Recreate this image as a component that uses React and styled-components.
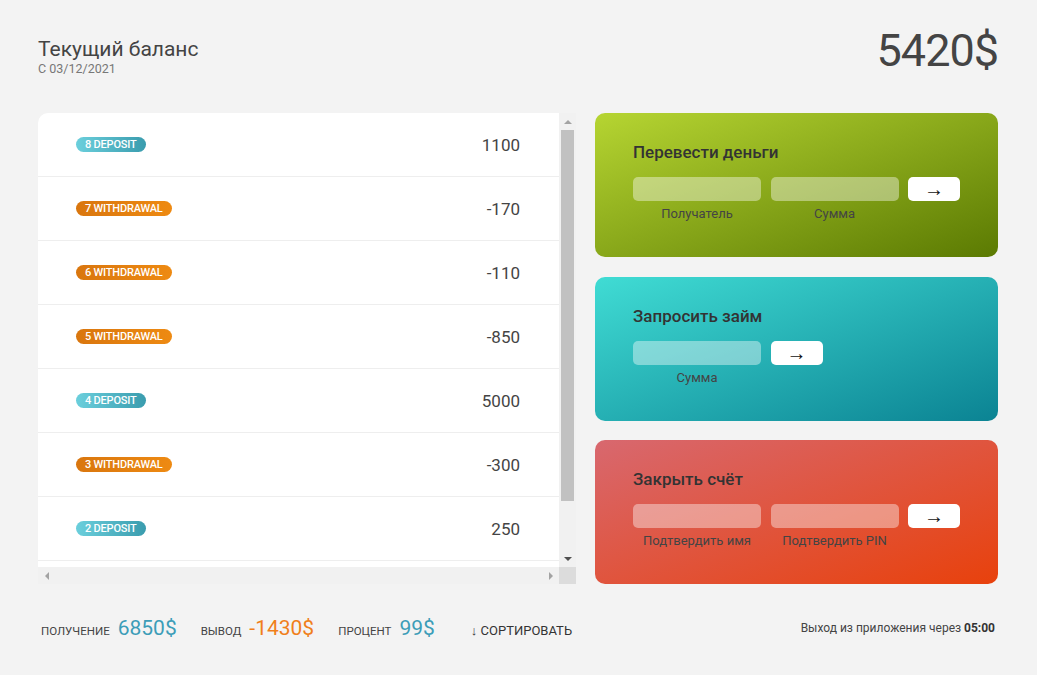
import styled, { createGlobalStyle } from "styled-components";

const movements = [
  { n: 8, type: "deposit", value: 1100 },
  { n: 7, type: "withdrawal", value: -170 },
  { n: 6, type: "withdrawal", value: -110 },
  { n: 5, type: "withdrawal", value: -850 },
  { n: 4, type: "deposit", value: 5000 },
  { n: 3, type: "withdrawal", value: -300 },
  { n: 2, type: "deposit", value: 250 },
  { n: 1, type: "deposit", value: 1000 },
];

const operations = [
  {
    kind: "transfer",
    title: "Перевести деньги",
    fields: ["Получатель", "Сумма"],
  },
  { kind: "loan", title: "Запросить займ", fields: ["Сумма"] },
  {
    kind: "close",
    title: "Закрыть счёт",
    fields: ["Подтвердить имя", "Подтвердить PIN"],
  },
];

const App = () => (
  <>
    <GlobalStyle />
    <Page>
      <Header>
        <div>
          <BalanceLabel>Текущий баланс</BalanceLabel>
          <BalanceDate>С 03/12/2021</BalanceDate>
        </div>
        <BalanceValue>5420$</BalanceValue>
      </Header>

      <Main>
        <Movements>
          <MovementList>
            {movements.map((m) => (
              <MovementRow key={m.n}>
                <TypeBadge type={m.type}>
                  {m.n} {m.type}
                </TypeBadge>
                <MovementValue>{m.value}</MovementValue>
              </MovementRow>
            ))}
          </MovementList>
          <VScroll>
            <ScrollButton>
              <Arrow dir="up" />
            </ScrollButton>
            <Thumb />
            <ScrollButton>
              <Arrow dir="down" dark />
            </ScrollButton>
          </VScroll>
          <HScroll>
            <ScrollButton>
              <Arrow dir="left" />
            </ScrollButton>
            <ScrollButton>
              <Arrow dir="right" />
            </ScrollButton>
          </HScroll>
          <ScrollCorner />
        </Movements>

        <Operations>
          {operations.map((op) => (
            <Operation key={op.kind} kind={op.kind}>
              <OpTitle>{op.title}</OpTitle>
              <Form count={op.fields.length}>
                {op.fields.map((f) => (
                  <Input key={f} />
                ))}
                <FormButton type="button">→</FormButton>
                {op.fields.map((f) => (
                  <FieldLabel key={f}>{f}</FieldLabel>
                ))}
              </Form>
            </Operation>
          ))}
        </Operations>
      </Main>

      <Footer>
        <Summary>
          <SummaryLabel>получение</SummaryLabel>
          <SummaryValue color="#3c9db8">6850$</SummaryValue>
          <SummaryLabel>вывод</SummaryLabel>
          <SummaryValue color="#f07f1a">-1430$</SummaryValue>
          <SummaryLabel>процент</SummaryLabel>
          <SummaryValue color="#3c9db8">99$</SummaryValue>
          <SortButton>↓ сортировать</SortButton>
        </Summary>
        <Logout>
          Выход из приложения через <b>05:00</b>
        </Logout>
      </Footer>
    </Page>
  </>
);

const GlobalStyle = createGlobalStyle`
  * {
    box-sizing: border-box;
  }
  body {
    margin: 0;
    background-color: #f3f3f3;
    font-family: Roboto, "Liberation Sans", sans-serif;
    color: #444;
  }
`;

const Page = styled.div`
  width: 960px;
  margin-left: 38px;
  padding-top: 28px;
`;

const Header = styled.div`
  display: flex;
  justify-content: space-between;
  align-items: flex-start;
  height: 85px;
`;

const BalanceLabel = styled.p`
  margin: 9px 0 0;
  font-size: 21px;
  color: #444;
`;

const BalanceDate = styled.p`
  margin: 0;
  font-size: 12.5px;
  color: #777;
`;

const BalanceValue = styled.p`
  margin: 0;
  font-size: 45px;
  line-height: 1;
  letter-spacing: -1px;
  color: #444;
`;

const Main = styled.div`
  display: grid;
  grid-template-columns: 538px 403px;
  gap: 19px;
`;

const Movements = styled.div`
  display: grid;
  grid-template-columns: 1fr 17px;
  grid-template-rows: 454px 17px;
  background-color: #fff;
  border-radius: 10px 0 0 0;
  overflow: hidden;
`;

const MovementList = styled.div`
  overflow: hidden;
`;

const MovementRow = styled.div`
  display: flex;
  align-items: center;
  justify-content: space-between;
  height: 64px;
  padding: 0 39px 0 38px;
  border-bottom: 1px solid #eee;
`;

const TypeBadge = styled.div`
  font-size: 11px;
  font-weight: 500;
  text-transform: uppercase;
  letter-spacing: -0.2px;
  color: #fff;
  padding: 1px 9px;
  line-height: 13px;
  border-radius: 10px;
  background-image: ${(p) =>
    p.type === "deposit"
      ? "linear-gradient(to right, #6bcfdc, #3a9cae)"
      : "linear-gradient(to right, #d9760e, #ee8a12)"};
`;

const MovementValue = styled.div`
  font-size: 17px;
  color: #444;
`;

const VScroll = styled.div`
  display: flex;
  flex-direction: column;
  justify-content: space-between;
  align-items: center;
  background-color: #f1f1f1;
`;

const HScroll = styled.div`
  display: flex;
  justify-content: space-between;
  align-items: center;
  background-color: #f1f1f1;
`;

const ScrollCorner = styled.div`
  background-color: #dcdcdc;
`;

const ScrollButton = styled.div`
  width: 17px;
  height: 17px;
  display: flex;
  align-items: center;
  justify-content: center;
`;

const arrowBorders = {
  up: "border-width: 0 4px 4px; border-color: transparent transparent var(--c);",
  down: "border-width: 4px 4px 0; border-color: var(--c) transparent transparent;",
  left: "border-width: 4px 4px 4px 0; border-color: transparent var(--c) transparent transparent;",
  right: "border-width: 4px 0 4px 4px; border-color: transparent transparent transparent var(--c);",
};

const Arrow = styled.span`
  --c: ${(p) => (p.dark ? "#505050" : "#a3a3a3")};
  width: 0;
  height: 0;
  border-style: solid;
  ${(p) => arrowBorders[p.dir]}
`;

const Thumb = styled.div`
  width: 13px;
  height: 371px;
  margin-bottom: auto;
  background-color: #c1c1c1;
`;

const Operations = styled.div`
  display: grid;
  grid-template-rows: repeat(3, 144px);
  gap: 19.5px;
`;

const gradients = {
  transfer: "linear-gradient(to bottom right, #b6d532, #5b7a02)",
  loan: "linear-gradient(to bottom right, #40dcd4, #0b8393)",
  close: "linear-gradient(to bottom right, #d8686f, #e8410c)",
};

const Operation = styled.div`
  border-radius: 10px;
  padding: 29px 38px;
  background-image: ${(p) => gradients[p.kind]};
  color: #333;
`;

const OpTitle = styled.h2`
  margin: 0 0 15px;
  font-size: 17px;
  font-weight: 500;
  color: #333;
`;

const Form = styled.form`
  display: grid;
  grid-template-columns: ${(p) => "128px ".repeat(p.count)} 52px;
  justify-content: start;
  column-gap: 9.5px;
  row-gap: 5px;
  margin: 0;
`;

const Input = styled.input`
  width: 100%;
  height: 24px;
  border: none;
  border-radius: 5px;
  background-color: rgba(255, 255, 255, 0.4);
  font-family: inherit;
  outline: none;
`;

const FormButton = styled.button`
  height: 24px;
  border: none;
  border-radius: 5px;
  background-color: #fff;
  font-size: 20px;
  line-height: 1;
  color: #111;
  padding: 0;
  font-family: "Liberation Sans", sans-serif;
`;

const FieldLabel = styled.label`
  grid-row: 2;
  text-align: center;
  font-size: 13px;
  color: #444;
`;

const Footer = styled.div`
  display: flex;
  justify-content: space-between;
  align-items: center;
  margin-top: 32px;
  padding: 0 3px;
`;

const Summary = styled.div`
  display: flex;
  align-items: baseline;
`;

const SummaryLabel = styled.span`
  font-size: 11.5px;
  text-transform: uppercase;
  color: #444;
  margin-right: 8px;
`;

const SummaryValue = styled.span`
  font-size: 21px;
  color: ${(p) => p.color};
  margin-right: 24px;
`;

const SortButton = styled.button`
  margin-left: 12px;
  border: none;
  background: none;
  padding: 0;
  font-family: inherit;
  font-size: 13px;
  text-transform: uppercase;
  color: #333;
`;

const Logout = styled.p`
  margin: 0;
  font-size: 12px;
  color: #444;

  b {
    color: #333;
  }
`;

export default App;
